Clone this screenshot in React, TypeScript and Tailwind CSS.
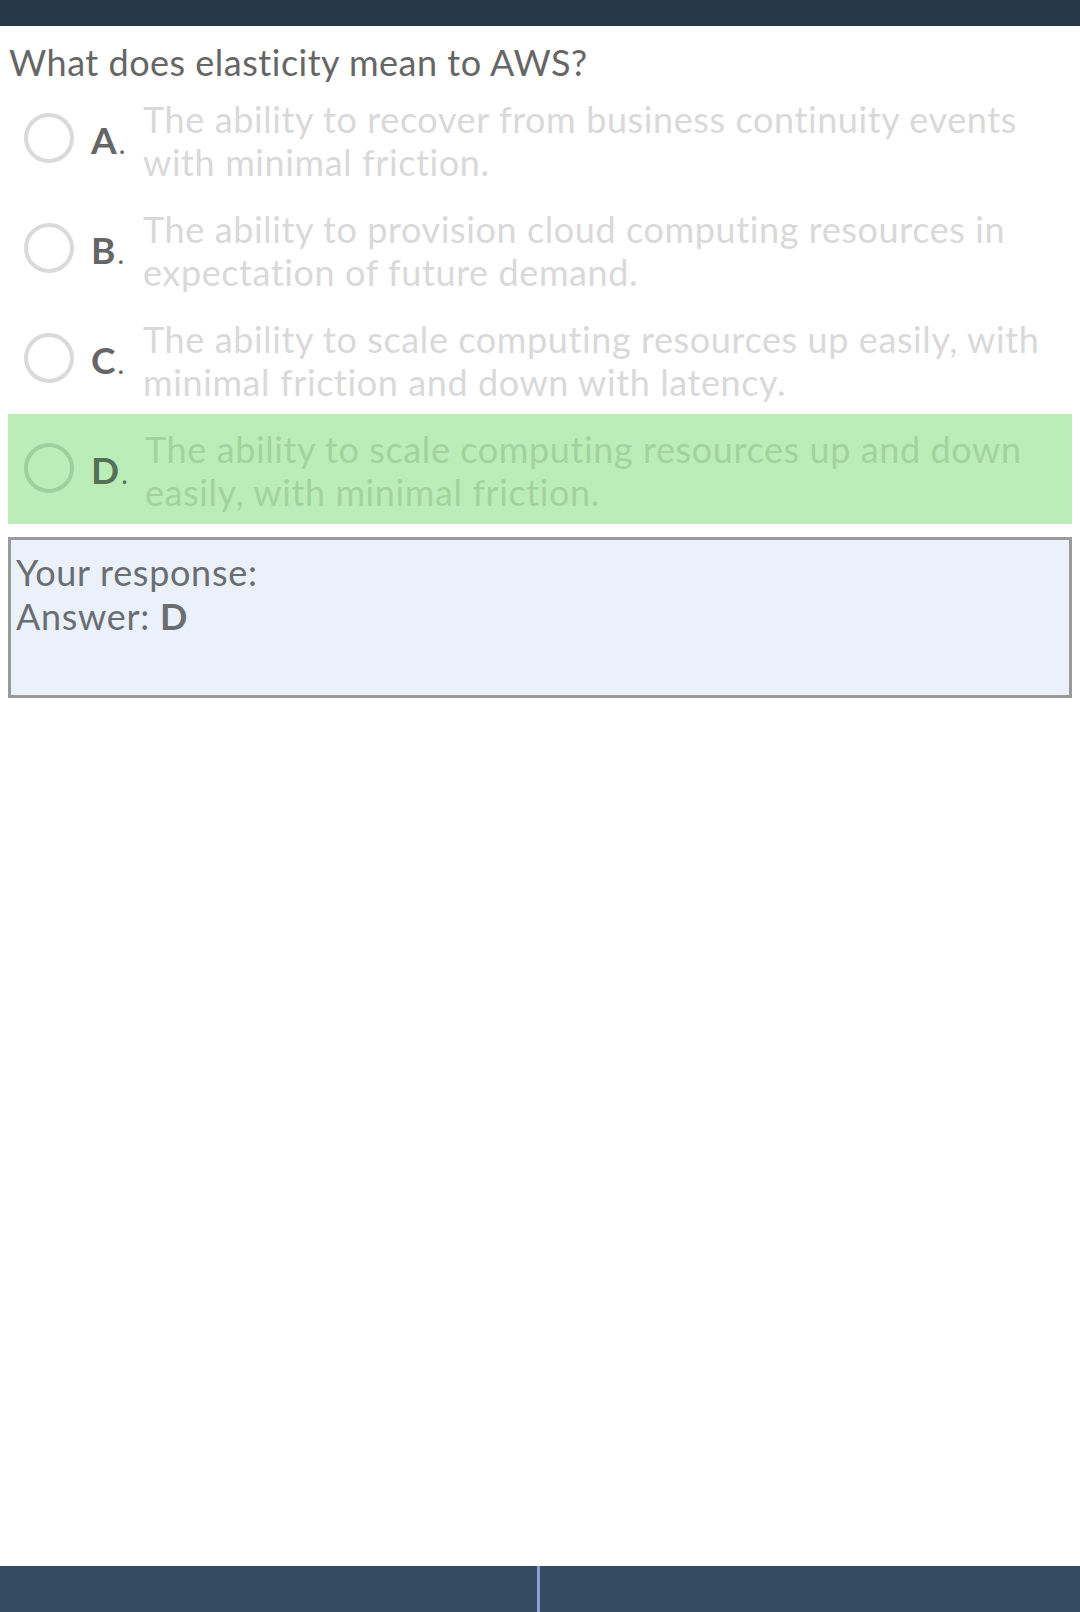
import React from "react";

type Opt = { letter: string; lines: string[]; correct?: boolean };

const options: Opt[] = [
  { letter: "A", lines: ["The ability to recover from business continuity events", "with minimal friction."] },
  { letter: "B", lines: ["The ability to provision cloud computing resources in", "expectation of future demand."] },
  { letter: "C", lines: ["The ability to scale computing resources up easily, with", "minimal friction and down with latency."] },
  { letter: "D", lines: ["The ability to scale computing resources up and down", "easily, with minimal friction."], correct: true },
];

function Row({ o }: { o: Opt }) {
  return (
    <div
      className={
        "mx-[8px] flex h-[110px] pt-[14px] pb-[10px] " + (o.correct ? "bg-[#bbedb9]" : "bg-transparent")
      }
    >
      <div className="flex w-[135px] shrink-0 items-center pb-[6px]">
        <div
          className={
            "ml-[16px] h-[50px] w-[50px] rounded-full border-[4px] " +
            (o.correct ? "border-[#9fcf9c]" : "border-[#dadada]")
          }
        />
        <div
          className={
            "ml-[17px] mt-[6px] text-[37px] leading-[43px] " + (o.correct ? "text-[#55705a]" : "text-[#666666]")
          }
        >
          <span className="font-bold">{o.letter}</span>
          <span className="ml-[2px] text-[28px]">.</span>
        </div>
      </div>
      <div
        className={
          "whitespace-nowrap text-[36px] leading-[43px] tracking-[0.6px] " +
          (o.correct ? "pl-[2px] text-[#a2d39f]" : "text-[#d9d9d9]")
        }
      >
        {o.lines.map((l, i) => (
          <div key={i}>{l}</div>
        ))}
      </div>
    </div>
  );
}

export default function App() {
  return (
    <div
      className="flex min-h-[1612px] w-full flex-col bg-white"
      style={{ fontFamily: "Lato, 'Noto Sans', sans-serif" }}
    >
      <div className="h-[26px] shrink-0 bg-[#27384a]" />
      <div className="pl-[9px] pt-[15px] text-[36px] leading-[43px] tracking-[0.5px] text-[#666666]">
        What does elasticity mean to AWS?
      </div>
      {options.map((o) => (
        <Row key={o.letter} o={o} />
      ))}
      <div className="mx-[8px] mt-[13px] h-[161px] border-[3px] border-[#9a9a9a] bg-[#eaf1fa] pl-[5px] pt-[10px] text-[36px] leading-[44px] tracking-[0.7px] text-[#6a6e72]">
        <div>Your response:</div>
        <div>
          Answer: <span className="font-bold">D</span>
        </div>
      </div>
      <div className="flex-1" />
      <div className="flex h-[46px] shrink-0 bg-[#354b5f]">
        <div className="w-[537px]" />
        <div className="w-[3px] bg-[#8b9bd4]" />
        <div className="flex-1" />
      </div>
    </div>
  );
}
